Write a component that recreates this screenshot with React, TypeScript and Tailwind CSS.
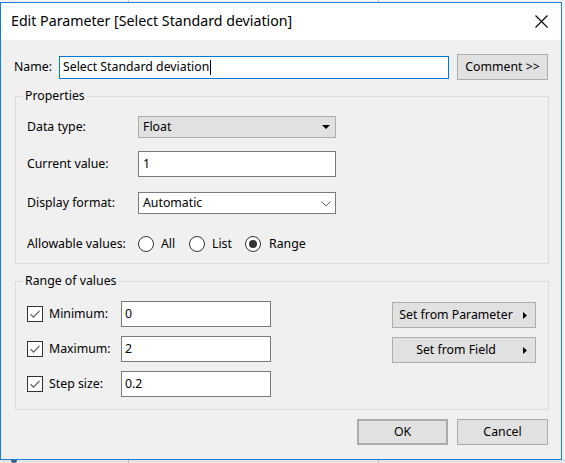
import React from "react";

const font = { fontFamily: '"Noto Sans", "Open Sans", "Liberation Sans", sans-serif' };

function Radio({ checked }: { checked?: boolean }) {
  return (
    <span className="relative flex h-[16px] w-[16px] shrink-0 items-center justify-center rounded-full border border-[#333333] bg-white">
      {checked && <span className="h-[8px] w-[8px] rounded-full bg-[#333333]" />}
    </span>
  );
}

function Check() {
  return (
    <span className="flex h-[16px] w-[16px] shrink-0 items-center justify-center border border-[#333333] bg-white">
      <svg width="12" height="10" viewBox="0 0 12 10">
        <path d="M1.5 5.2 L4.5 8.2 L10.5 1.8" fill="none" stroke="#555555" strokeWidth="1.1" />
      </svg>
    </span>
  );
}

function Btn({ children, className = "" }: { children: React.ReactNode; className?: string }) {
  return (
    <div
      className={
        "flex items-center justify-center border border-[#adadad] bg-[#e1e1e1] text-[12.3px] text-black " + className
      }
    >
      {children}
    </div>
  );
}

function ArrowBtn({ label }: { label: string }) {
  return (
    <div className="relative flex h-[26px] w-[144px] items-center justify-center border border-[#adadad] bg-[#e1e1e1] pr-[16px] text-[12.3px] text-black">
      {label}
      <svg className="absolute right-[8px] top-[9px]" width="4" height="7" viewBox="0 0 4 7">
        <path d="M0 0 L4 3.5 L0 7 Z" fill="#000" />
      </svg>
    </div>
  );
}

function RangeRow({ label, value }: { label: string; value: string }) {
  return (
    <div className="flex h-[26px] items-center">
      <Check />
      <span className="ml-[6px] w-[72px] text-[12.3px]">{label}</span>
      <div className="flex h-[26px] w-[150px] items-center border border-[#7a7a7a] bg-white pl-[3px] text-[12.3px]">
        {value}
      </div>
    </div>
  );
}

export default function App() {
  return (
    <div className="relative h-[463px] w-[565px] overflow-hidden bg-[#f2f2f2]" style={font}>
      <div className="absolute left-[128px] top-0 h-[2px] w-px bg-[#c8c8c8]" />
      <div className="absolute left-[378px] top-0 h-[2px] w-px bg-[#c8c8c8]" />
      <div className="absolute bottom-0 left-0 h-[4px] w-full bg-[#e4e4e4]" />
      <div className="absolute bottom-0 left-[11px] h-[4px] w-[6px] rounded-b-[3px] bg-[#3a5f8c]" />
      <div className="absolute bottom-0 left-[128px] h-[4px] w-px bg-[#bcbcbc]" />
      <div className="absolute bottom-0 left-[378px] h-[4px] w-px bg-[#bcbcbc]" />

      <div className="relative mt-[2px] flex h-[458px] w-[562px] flex-col border border-[#1a7fd4] bg-white text-black">
        {/* title bar */}
        <div className="flex h-[37px] shrink-0 items-center justify-between bg-white pl-[10px] pr-[13px]">
          <span className="text-[14.2px] leading-none text-black">Edit Parameter [Select Standard deviation]</span>
          <svg width="13" height="13" viewBox="0 0 13 13">
            <path d="M0.5 0.5 L12.5 12.5 M12.5 0.5 L0.5 12.5" stroke="#000" strokeWidth="1.1" />
          </svg>
        </div>

        {/* body */}
        <div className="flex flex-1 flex-col bg-[#f0f0f0] pt-[14px]">
          {/* name row */}
          <div className="flex h-[26px] items-center pl-[13px]">
            <span className="w-[45px] text-[12.3px]">Name:</span>
            <div className="flex h-[23px] w-[390px] items-center border border-[#0078d7] bg-white pl-[3px] text-[12.3px]">
              Select Standard deviation
              <span className="ml-px h-[15px] w-px bg-black" />
            </div>
            <Btn className="ml-[8px] h-[26px] w-[91px]">Comment &gt;&gt;</Btn>
          </div>

          {/* properties */}
          <fieldset className="ml-[14px] mt-[8px] w-[534px] border border-[#dcdcdc] pb-[11px] pl-[11px]">
            <legend className="ml-[-4px] px-[2px] text-[12.3px] leading-[16px]">Properties</legend>
            <div className="flex flex-col pt-[12px]">
              <div className="flex h-[22px] items-center">
                <span className="w-[111px] text-[12.3px]">Data type:</span>
                <div className="relative flex h-[22px] w-[198px] items-center border border-[#adadad] bg-[#e1e1e1] pl-[4px] text-[12.3px]">
                  Float
                  <svg className="absolute right-[5px] top-[8px]" width="8" height="4" viewBox="0 0 8 4">
                    <path d="M0 0 L8 0 L4 4 Z" fill="#000" />
                  </svg>
                </div>
              </div>
              <div className="mt-[13px] flex h-[26px] items-center">
                <span className="w-[111px] text-[12.3px]">Current value:</span>
                <div className="flex h-[26px] w-[198px] items-center border border-[#7a7a7a] bg-white pl-[4px] text-[12.3px]">
                  1
                </div>
              </div>
              <div className="mt-[15px] flex h-[22px] items-center">
                <span className="w-[111px] text-[12.3px]">Display format:</span>
                <div className="relative flex h-[22px] w-[198px] items-center border border-[#7a7a7a] bg-white pl-[4px] text-[12.3px]">
                  Automatic
                  <svg className="absolute right-[4px] top-[8px]" width="10" height="6" viewBox="0 0 10 6">
                    <path d="M0.5 0.5 L5 5 L9.5 0.5" fill="none" stroke="#606060" strokeWidth="1" />
                  </svg>
                </div>
              </div>
              <div className="mt-[22px] flex h-[16px] items-center">
                <span className="w-[111px] text-[12.3px]">Allowable values:</span>
                <div className="flex w-[51px] items-center">
                  <Radio />
                  <span className="ml-[7px] text-[12.3px]">All</span>
                </div>
                <div className="flex w-[56px] items-center">
                  <Radio />
                  <span className="ml-[7px] text-[12.3px]">List</span>
                </div>
                <div className="flex items-center">
                  <Radio checked />
                  <span className="ml-[8px] text-[12.3px]">Range</span>
                </div>
              </div>
            </div>
          </fieldset>

          {/* range */}
          <fieldset className="ml-[14px] mt-[9px] w-[534px] border border-[#dcdcdc] pb-[12px] pl-[11px] pr-[12px]">
            <legend className="ml-[-4px] px-[2px] text-[12.3px] leading-[16px]">Range of values</legend>
            <div className="flex justify-between pt-[12px]">
              <div className="flex flex-col gap-[9px]">
                <RangeRow label="Minimum:" value="0" />
                <RangeRow label="Maximum:" value="2" />
                <RangeRow label="Step size:" value="0.2" />
              </div>
              <div className="flex flex-col gap-[9px] pt-px">
                <ArrowBtn label="Set from Parameter" />
                <ArrowBtn label="Set from Field" />
              </div>
            </div>
          </fieldset>

          {/* footer */}
          <div className="mt-[9px] flex justify-end gap-[9px] pr-[13px]">
            <Btn className="h-[26px] w-[91px] border-2 border-[#0078d7]">OK</Btn>
            <Btn className="h-[26px] w-[91px]">Cancel</Btn>
          </div>
        </div>
      </div>
    </div>
  );
}
